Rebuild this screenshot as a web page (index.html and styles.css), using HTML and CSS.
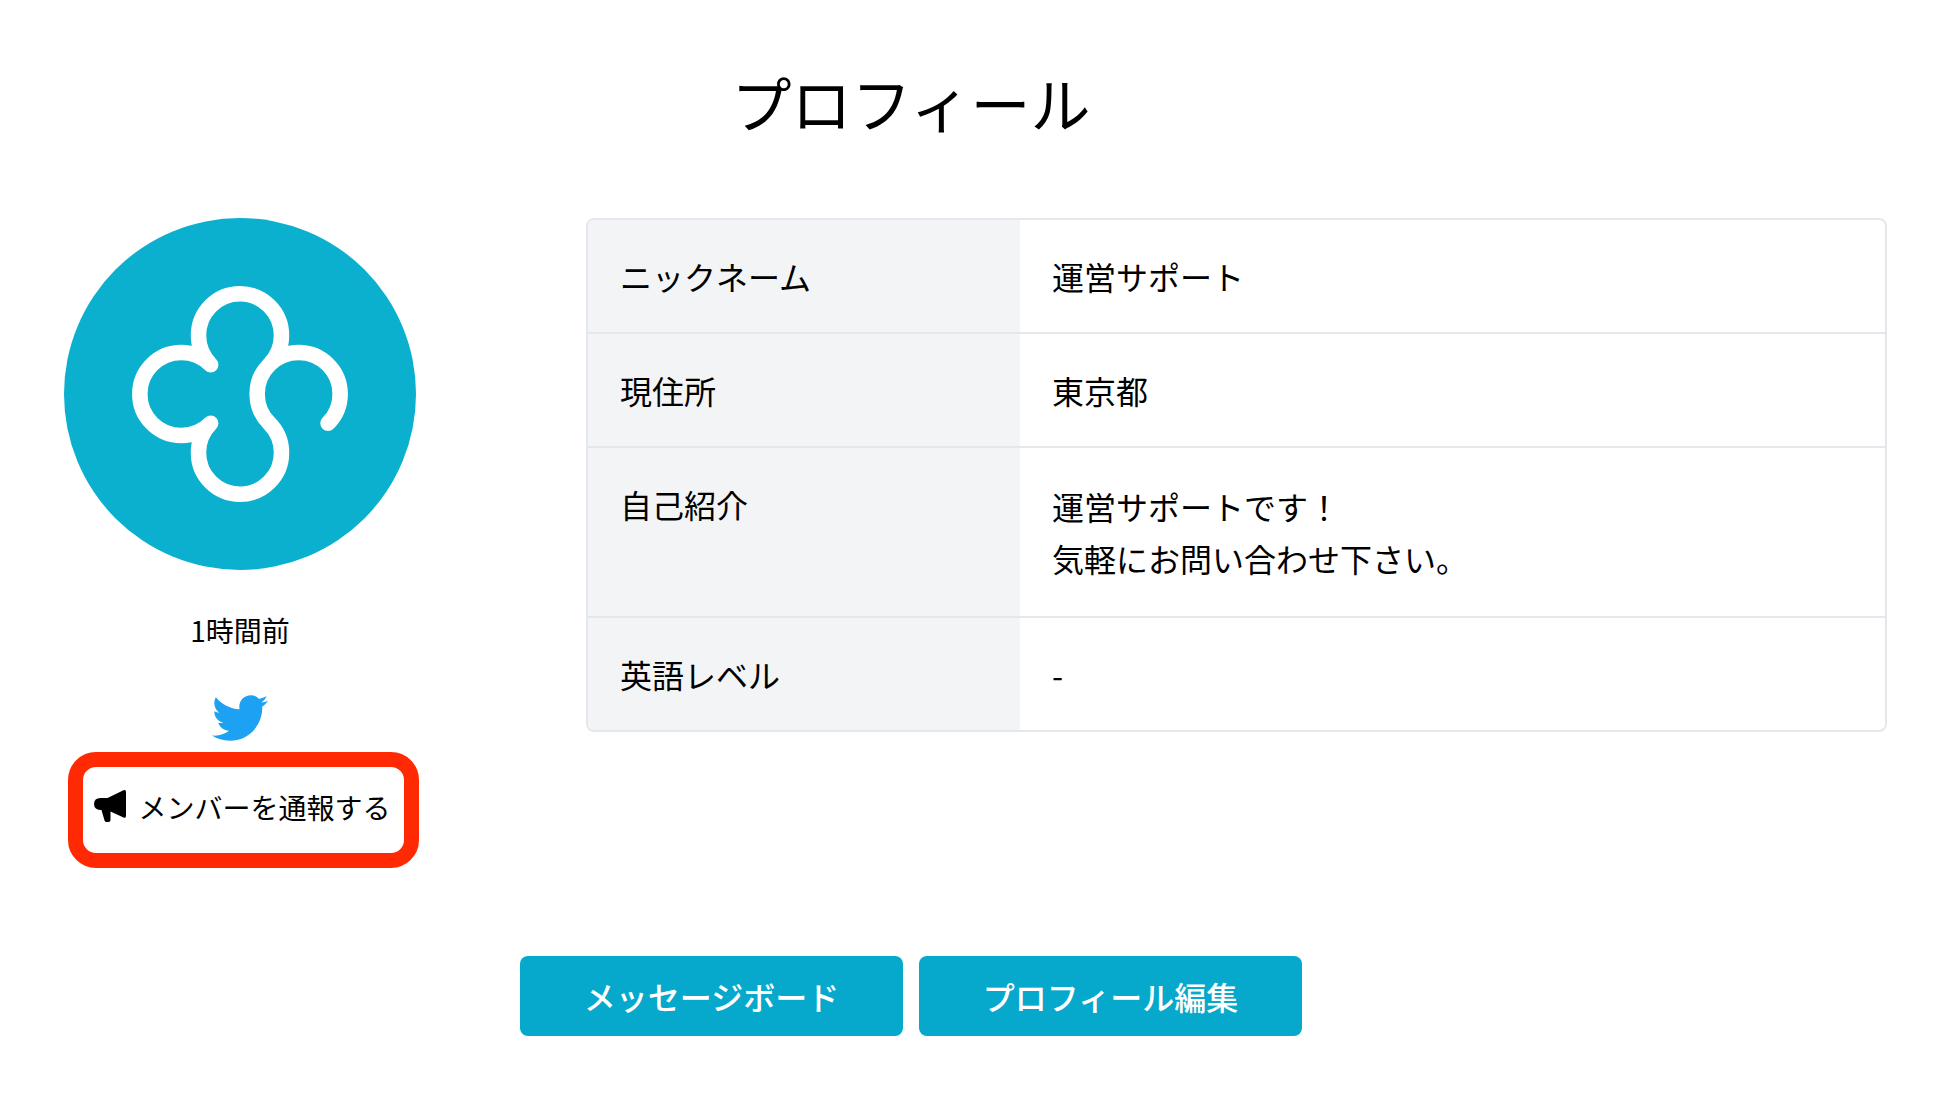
FILE: index.html
```html
<!DOCTYPE html>
<html lang="ja">
<head>
    <meta charset="UTF-8">
    <meta name="viewport" content="width=device-width, initial-scale=1.0">
    <title>プロフィール</title>
    <link rel="stylesheet" href="styles.css">
</head>
<body>
    <main class="page">
        <h1 class="title">プロフィール</h1>

        <div class="profile">
            <aside class="side">
                <!-- アバター -->
                <svg class="avatar" viewBox="0 0 352 352" role="img" aria-label="運営サポート">
                    <circle cx="176" cy="176" r="176" fill="#0ab0ce"/>
                    <path d="M264 205.3A41.5 41.5 0 1 0 205.3 205.3A41.5 41.5 0 1 1 146.7 205.3A41.5 41.5 0 1 1 146.7 146.7A41.5 41.5 0 1 1 205.3 146.7" fill="none" stroke="#fff" stroke-width="15.5" stroke-linecap="round" stroke-linejoin="round"/>
                </svg>
                <p class="last-login">1時間前</p>
                <a class="twitter" href="#" aria-label="Twitter">
                    <svg viewBox="0 0 512 512"><path fill="#1da1f2" d="M459.37 151.716c.325 4.548.325 9.097.325 13.645 0 138.72-105.583 298.558-298.558 298.558-59.452 0-114.68-17.219-161.137-47.106 8.447.974 16.568 1.299 25.34 1.299 49.055 0 94.213-16.568 130.274-44.832-46.132-.975-84.792-31.188-98.112-72.772 6.498.974 12.995 1.624 19.818 1.624 9.421 0 18.843-1.3 27.614-3.573-48.081-9.747-84.143-51.98-84.143-102.985v-1.299c13.969 7.797 30.214 12.67 47.431 13.319-28.264-18.843-46.781-51.005-46.781-87.391 0-19.492 5.197-37.36 14.294-52.954 51.655 63.675 129.3 105.258 216.365 109.807-1.624-7.797-2.599-15.918-2.599-24.04 0-57.828 46.782-104.934 104.934-104.934 30.213 0 57.502 12.67 76.67 33.137 23.715-4.548 46.456-13.32 66.599-25.34-7.798 24.366-24.366 44.833-46.132 57.827 21.117-2.273 41.584-8.122 60.426-16.243-14.292 20.791-32.161 39.308-52.628 54.253z"/></svg>
                </a>
                <button class="report" type="button">
                    <svg viewBox="0 0 32 32"><path d="M29.500 .3Q32 -.6 32 2V26Q32 28.500 29.500 27.500L16.500 21.500V30Q16.500 32 14.500 32H12.500Q11 32 10.500 30.500L7.500 20Q0 20 0 14Q0 8 6.500 8H13.500Z"/></svg>
                    メンバーを通報する
                </button>
            </aside>

            <div class="info">
                <table>
                    <tbody>
                        <tr>
                            <th scope="row">ニックネーム</th>
                            <td>運営サポート</td>
                        </tr>
                        <tr>
                            <th scope="row">現住所</th>
                            <td>東京都</td>
                        </tr>
                        <tr>
                            <th scope="row">自己紹介</th>
                            <td class="intro">運営サポートです！<br>気軽にお問い合わせ下さい。</td>
                        </tr>
                        <tr>
                            <th scope="row">英語レベル</th>
                            <td>-</td>
                        </tr>
                    </tbody>
                </table>
            </div>
        </div>

        <div class="actions">
            <button class="btn" type="button">メッセージボード</button>
            <button class="btn" type="button">プロフィール編集</button>
        </div>
    </main>
</body>
</html>
```
FILE: styles.css
```css
* {
    box-sizing: border-box;
}
body {
    margin: 0;
    background: #fff;
    color: #000;
    font-family: "Noto Sans CJK JP", sans-serif;
    font-size: 32px;
    line-height: 48px;
}
.page {
    padding: 57px 71px 72px 64px;
}
.title {
    margin: 0 0 71px;
    padding-right: 129px;
    font-size: 60px;
    font-weight: 400;
    line-height: 90px;
    text-align: center;
}
.profile {
    display: flex;
    align-items: flex-start;
    gap: 170px;
}
.side {
    display: flex;
    flex-direction: column;
    align-items: center;
    flex: 0 0 352px;
    min-width: 0;
    font-size: 28px;
    line-height: 40px;
}
.avatar {
    display: block;
    width: 352px;
    height: 352px;
}
.last-login {
    margin: 40px 0;
}
.twitter {
    display: block;
    height: 56px;
}
.twitter svg {
    display: block;
    width: 56px;
    height: 56px;
}
.report {
    display: flex;
    justify-content: center;
    align-items: center;
    align-self: flex-start;
    gap: 12px;
    width: 351px;
    height: 116px;
    margin: 6px 0 0 4px;
    padding: 0 2px 6px 0;
    border: 15px solid #ff2a04;
    border-radius: 28px;
    background: #fff;
    color: #000;
    font: inherit;
    white-space: nowrap;
    cursor: pointer;
}
.report svg {
    width: 32px;
    height: 32px;
    margin-bottom: 2px;
    flex: none;
}
.info {
    flex: 1;
    border: 2px solid #e4e7eb;
    border-radius: 8px;
    overflow: hidden;
}
table {
    width: 100%;
    border-collapse: collapse;
}
th, td {
    padding: 32px;
    font-weight: 400;
    text-align: left;
    vertical-align: top;
}
th {
    width: 432px;
    background: #f3f4f6;
}
tr + tr th, tr + tr td {
    border-top: 2px solid #e4e7eb;
}
.intro {
    line-height: 52px;
}
.actions {
    display: flex;
    justify-content: center;
    gap: 16px;
    margin-top: 88px;
    padding-right: 129px;
}
.btn {
    width: 383px;
    height: 80px;
    padding: 0;
    border: 0;
    border-radius: 8px;
    background: #06a9cc;
    color: #fff;
    font: inherit;
    font-weight: 500;
    cursor: pointer;
}
```
